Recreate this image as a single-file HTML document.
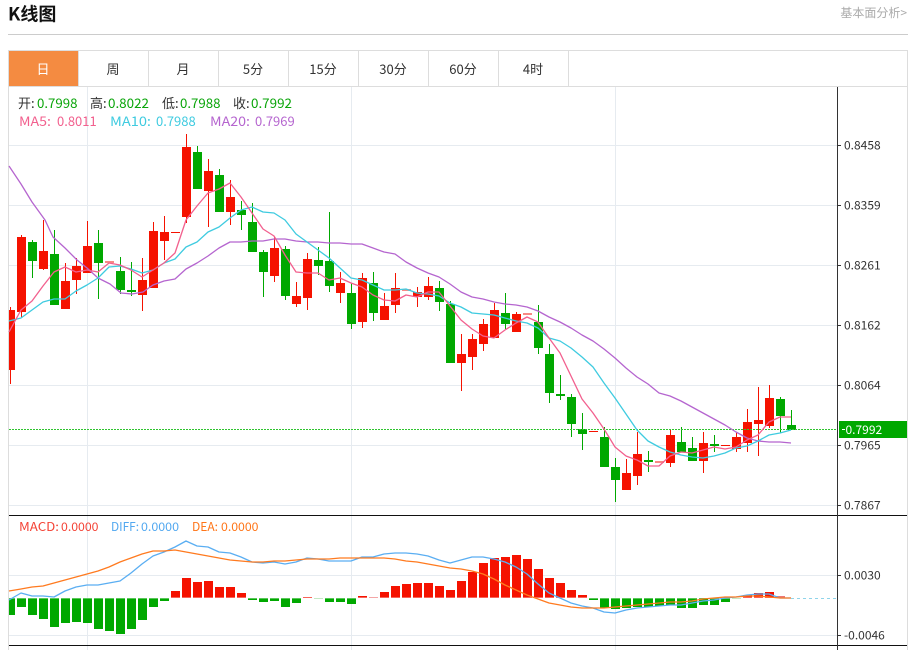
<!DOCTYPE html>
<html><head><meta charset="utf-8"><style>
html,body{margin:0;padding:0;background:#fff;width:913px;height:650px;overflow:hidden}
svg{position:absolute;left:0;top:0;display:block}
text{font-family:"Noto Sans CJK SC","Liberation Sans",sans-serif;font-size:13px;fill:#333}
.tab{text-anchor:middle;font-size:13px}
.ax{font-size:12px;fill:#333}
.g{fill:#0aa50a}
.s{font-size:12px}
</style></head><body>
<svg width="913" height="650" viewBox="0 0 913 650">
<text x="8" y="20.5" style="font-size:18px;font-weight:700;fill:#111">K线图</text>
<text x="907" y="17" text-anchor="end" style="font-size:12px;fill:#aaa">基本面分析&gt;</text>
<g shape-rendering="crispEdges">
<rect x="8" y="34" width="900" height="1" fill="#ccc"/>
<path d="M8.5 650V50.5H907.5V650M8 86.5H908" fill="none" stroke="#ddd"/>
<path d="M78.5 51V86M148.5 51V86M218.5 51V86M288.5 51V86M358.5 51V86M428.5 51V86M498.5 51V86M568.5 51V86" stroke="#ddd" fill="none"/>
<rect x="9" y="51" width="69" height="35" fill="#f48b41"/>
<path d="M9 145.5H837M9 205.5H837M9 265.5H837M9 325.5H837M9 385.5H837M9 445.5H837M9 505.5H837M9 575.5H837M9 635.5H837M87.5 87V650M351.5 87V650M615.5 87V650" stroke="#e6ebf0" fill="none"/>
</g>
<g class="tabs">
<text x="43" y="74" class="tab" style="fill:#fff">日</text>
<text x="113" y="74" class="tab">周</text>
<text x="183" y="74" class="tab">月</text>
<text x="253" y="74" class="tab">5分</text>
<text x="323" y="74" class="tab">15分</text>
<text x="393" y="74" class="tab">30分</text>
<text x="463" y="74" class="tab">60分</text>
<text x="533" y="74" class="tab">4时</text>
</g>
<g shape-rendering="crispEdges">
<path fill="none" stroke="#f51200" d="M10.5 307V384M21.5 235V317M43.5 220V270M65.5 263V309M76.5 258V294M87.5 221V273M142.5 258V311M153.5 222V288M164.5 216V260M186.5 134V223M208.5 159V227M230.5 180V225M274.5 237V282M296.5 282V307M307.5 253V310M340.5 272V303M362.5 273V328M384.5 293V320M395.5 273V313M417.5 287V307M428.5 277V300M461.5 334V391M472.5 334V370M483.5 319V351M494.5 303V338M516.5 312V332M626.5 459V490M637.5 432V485M670.5 429V467M703.5 432V473M736.5 433V452M747.5 409V452M758.5 387V456M769.5 385V428"/>
<path fill="none" stroke="#00a800" d="M32.5 240V278M54.5 230V305M98.5 230V299M120.5 257V294M131.5 262V296M197.5 146V189M219.5 169V212M241.5 201V230M252.5 203V252M263.5 250V297M285.5 246V300M318.5 247V275M329.5 212V292M351.5 283V329M373.5 272V321M439.5 281V311M450.5 301V363M505.5 293V329M538.5 305V354M549.5 344V403M560.5 375V400M571.5 394V437M582.5 413V450M604.5 427V467M615.5 458V502M648.5 451V472M681.5 427V452M692.5 437V461M714.5 435V452M780.5 397V433M791.5 410V430"/>
<path fill="#f51200" d="M9 310h6V370h-6zM17 237h9V312h-9zM39 251h9V269h-9zM61 281h9V309h-9zM72 266h9V280h-9zM83 246h9V273h-9zM138 280h9V295h-9zM149 231h9V288h-9zM160 232h9V241h-9zM171 232h9V233h-9zM182 147h9V217h-9zM204 171h9V191h-9zM226 197h9V212h-9zM270 248h9V276h-9zM292 296h9V304h-9zM303 259h9V298h-9zM336 283h9V293h-9zM358 278h9V322h-9zM380 306h9V320h-9zM391 288h9V305h-9zM413 292h9V297h-9zM424 286h9V297h-9zM457 354h9V363h-9zM468 339h9V357h-9zM479 324h9V344h-9zM490 310h9V338h-9zM512 314h9V332h-9zM589 431h9V432h-9zM622 473h9V490h-9zM633 454h9V476h-9zM666 435h9V463h-9zM699 443h9V461h-9zM721 445h9V446h-9zM732 437h9V449h-9zM743 422h9V443h-9zM754 420h9V424h-9zM765 398h9V426h-9z"/>
<path fill="#f88a85" d="M105 261h9V263h-9zM402 289h9V291h-9zM523 313h9V315h-9zM655 461h9V463h-9z"/>
<path fill="#00a800" d="M28 242h9V261h-9zM50 254h9V305h-9zM94 243h9V263h-9zM116 271h9V290h-9zM127 290h9V292h-9zM193 152h9V189h-9zM215 175h9V212h-9zM237 210h9V215h-9zM248 222h9V252h-9zM259 252h9V272h-9zM281 249h9V296h-9zM314 260h9V266h-9zM325 261h9V286h-9zM347 293h9V324h-9zM369 283h9V313h-9zM435 288h9V302h-9zM446 304h9V363h-9zM501 313h9V324h-9zM534 322h9V348h-9zM545 354h9V393h-9zM556 394h9V396h-9zM567 397h9V424h-9zM578 429h9V434h-9zM600 437h9V467h-9zM611 467h9V480h-9zM644 460h9V462h-9zM677 442h9V452h-9zM688 448h9V461h-9zM710 444h9V446h-9zM776 399h9V416h-9zM787 425h9V430h-9z"/>
</g>
<path fill="none" stroke="#2fc42f" stroke-dasharray="2 1" d="M9 429.5H837" shape-rendering="crispEdges"/>
<g fill="none" stroke-width="1.3" stroke-linejoin="round">
<polyline stroke="#b565cf" points="9,166 21,184 32,202 45,220 53,237 65,248 77,260 87,268 98,278 110,284 121,293 132,294 143,292 153,285 164,281 175,279 186,269 197,263 208,256 219,248 230,242 241,242 252,241 263,241 274,239 285,239 296,241 307,242 318,242 329,243 340,243 351,244 362,244 373,248 384,252 395,254 406,262 417,268 428,273 439,277 450,284 461,292 472,297 483,299 494,302 505,304 516,305 527,307 538,311 549,317 560,322 571,328 582,335 593,341 604,349 615,358 626,368 637,377 648,384 659,393 670,396 681,401 692,407 703,413 714,419 725,425 736,432 747,438 758,441 769,442 780,442 791,443"/>
<polyline stroke="#3fcbe0" points="9,321 21,318 32,310 43,302 54,299 65,299 76,291 87,285 98,278 109,267 120,266 131,269 142,273 153,270 164,263 175,259 186,247 197,242 208,232 219,227 230,218 241,210 252,207 263,212 274,213 285,220 296,234 307,242 318,250 329,258 340,268 351,278 362,280 373,285 384,290 395,290 406,289 417,293 428,294 439,296 450,303 461,307 472,313 483,314 494,315 505,318 516,321 527,323 538,328 549,338 560,341 571,348 582,357 593,367 604,383 615,398 626,414 637,430 648,441 659,447 670,452 681,455 692,457 703,458 714,456 725,453 736,448 747,446 758,441 769,435 780,433 791,430"/>
<polyline stroke="#f2608e" points="9,332 21,310 32,301 43,286 54,272 65,267 76,272 87,270 98,272 109,263 120,265 131,270 142,277 153,270 164,263 175,253 186,220 197,206 208,193 219,189 230,183 241,197 252,213 263,229 274,236 285,255 296,272 307,273 318,273 329,280 340,278 351,283 362,287 373,295 384,300 395,301 406,295 417,297 428,292 439,292 450,306 461,320 472,329 483,336 494,338 505,330 516,323 527,317 538,322 549,338 560,353 571,376 582,399 593,413 604,429 615,447 626,456 637,460 648,466 659,466 670,456 681,452 692,453 703,450 714,447 725,449 736,447 747,440 758,435 769,422 780,417 791,417"/>
</g>
<!-- MACD bars -->
<g shape-rendering="crispEdges">
<path fill="#00a800" d="M9 598h6V615h-6zM17 598h9V607h-9zM28 598h9V615h-9zM39 598h9V619h-9zM50 598h9V627h-9zM61 598h9V623h-9zM72 598h9V622h-9zM83 598h9V623h-9zM94 598h9V629h-9zM105 598h9V631h-9zM116 598h9V634h-9zM127 598h9V629h-9zM138 598h9V620h-9zM149 598h9V607h-9zM160 598h9V601h-9zM248 598h9V600h-9zM259 598h9V602h-9zM270 598h9V601h-9zM281 598h9V607h-9zM292 598h9V603h-9zM325 598h9V602h-9zM336 598h9V602h-9zM347 598h9V604h-9zM589 598h9V600h-9zM600 598h9V608h-9zM611 598h9V609h-9zM622 598h9V608h-9zM633 598h9V607h-9zM644 598h9V607h-9zM655 598h9V606h-9zM666 598h9V605h-9zM677 598h9V608h-9zM688 598h9V608h-9zM699 598h9V605h-9zM710 598h9V605h-9zM721 598h9V602h-9z"/>
<path fill="#a5dca5" d="M314 598h9V599h-9zM732 598h9V599h-9z"/>
<path fill="#f51200" d="M171 591h9V598h-9zM182 578h9V598h-9zM193 582h9V598h-9zM204 581h9V598h-9zM215 587h9V598h-9zM226 587h9V598h-9zM237 593h9V598h-9zM303 597h9V598h-9zM358 596h9V598h-9zM380 592h9V598h-9zM391 586h9V598h-9zM402 584h9V598h-9zM413 583h9V598h-9zM424 583h9V598h-9zM435 586h9V598h-9zM446 590h9V598h-9zM457 581h9V598h-9zM468 572h9V598h-9zM479 563h9V598h-9zM490 558h9V598h-9zM501 557h9V598h-9zM512 555h9V598h-9zM523 559h9V598h-9zM534 569h9V598h-9zM545 578h9V598h-9zM556 583h9V598h-9zM567 590h9V598h-9zM578 595h9V598h-9zM743 595h9V598h-9zM754 593h9V598h-9zM765 592h9V598h-9z"/>
<path fill="#e77" d="M369 597h9V598h-9zM776 596h9V598h-9z"/>
<rect x="9" y="597" width="770" height="2" fill="#fff" opacity=".35"/>
</g>
<path fill="none" stroke="#8fd4ea" stroke-dasharray="3 3" d="M791 598.5H837"/>
<g fill="none" stroke-width="1.3" stroke-linejoin="round">
<polyline stroke="#5aaef2" points="9,600 21,593 32,596 43,596 54,597 65,591 76,587 87,585 98,585 109,583 120,581 131,573 142,564 153,556 164,552 175,547 186,541 197,546 208,547 219,552 230,553 241,557 252,562 263,563 274,562 285,564 296,562 307,558 318,559 329,561 340,561 351,561 362,557 373,557 384,554 395,553 406,553 417,554 428,556 439,560 450,563 461,560 472,557 483,557 494,559 505,562 516,567 527,574 538,584 549,593 560,598 571,603 582,606 593,608 604,612 615,613 626,610 637,608 648,607 659,606 670,605 681,605 692,603 703,601 714,600 725,598 736,597 747,595 758,594 769,594 780,598 791,598"/>
<polyline stroke="#ff7a1f" points="9,591 21,589 32,587 43,586 54,583 65,580 76,577 87,574 98,571 109,567 120,562 131,558 142,554 153,551 164,551 175,550 186,552 197,554 208,556 219,558 230,560 241,561 252,562 263,562 274,561 285,561 296,560 307,559 318,559 329,559 340,558 351,558 362,558 373,558 384,558 395,559 406,561 417,562 428,564 439,566 450,568 461,569 472,571 483,574 494,579 505,585 516,590 527,595 538,599 549,603 560,605 571,607 582,608 593,608 604,608 615,607 626,606 637,605 648,604 659,603 670,602 681,602 692,601 703,599 714,598 725,597 736,597 747,596 758,596 769,597 780,598 791,598"/>
</g>
<!-- axes -->
<g shape-rendering="crispEdges">
<path d="M9 515.5H907M9 645.5H907" stroke="#111" fill="none"/>
<path d="M837.5 87V650" stroke="#333" fill="none"/>
<path d="M837 145.5h4M837 205.5h4M837 265.5h4M837 325.5h4M837 385.5h4M837 445.5h4M837 505.5h4M837 575.5h4M837 635.5h4" stroke="#333" fill="none"/>
<rect x="839" y="421" width="68" height="17" fill="#00a800"/>
<path d="M842 429.5h3" stroke="#fff" fill="none"/>
</g>
<text class="ax" x="844" y="149.5">0.8458</text>
<text class="ax" x="844" y="209.5">0.8359</text>
<text class="ax" x="844" y="269.5">0.8261</text>
<text class="ax" x="844" y="329.5">0.8162</text>
<text class="ax" x="844" y="389.5">0.8064</text>
<text class="ax" x="844" y="449.5">0.7965</text>
<text class="ax" x="844" y="509.5">0.7867</text>
<text class="ax" x="844" y="579.5">0.0030</text>
<text class="ax" x="844" y="639.5">-0.0046</text>
<text x="845.5" y="434" style="fill:#fff;font-size:12px">0.7992</text>
<!-- legends -->
<text x="18" y="108">开:</text><text x="37" y="108" class="g" textLength="40.5" lengthAdjust="spacingAndGlyphs">0.7998</text>
<text x="90" y="108">高:</text><text x="108" y="108" class="g" textLength="41" lengthAdjust="spacingAndGlyphs">0.8022</text>
<text x="162" y="108">低:</text><text x="180" y="108" class="g" textLength="40.5" lengthAdjust="spacingAndGlyphs">0.7988</text>
<text x="233" y="108">收:</text><text x="251" y="108" class="g" textLength="41" lengthAdjust="spacingAndGlyphs">0.7992</text>
<text x="19" y="126" style="fill:#f2608e" textLength="32" lengthAdjust="spacingAndGlyphs">MA5:</text><text x="57" y="126" style="fill:#f2608e">0.8011</text>
<text x="110" y="126" style="fill:#3fcbe0" textLength="41" lengthAdjust="spacingAndGlyphs">MA10:</text><text x="156" y="126" style="fill:#3fcbe0">0.7988</text>
<text x="210" y="126" style="fill:#b565cf" textLength="40" lengthAdjust="spacingAndGlyphs">MA20:</text><text x="255" y="126" style="fill:#b565cf">0.7969</text>
<text x="19" y="531" class="s" style="fill:#f44336" textLength="40" lengthAdjust="spacingAndGlyphs">MACD:</text><text x="61" y="531" class="s" style="fill:#f44336" textLength="37.5" lengthAdjust="spacingAndGlyphs">0.0000</text>
<text x="111" y="531" class="s" style="fill:#52a8f0" textLength="28" lengthAdjust="spacingAndGlyphs">DIFF:</text><text x="141" y="531" class="s" style="fill:#52a8f0" textLength="38" lengthAdjust="spacingAndGlyphs">0.0000</text>
<text x="192" y="531" class="s" style="fill:#ff7518" textLength="26" lengthAdjust="spacingAndGlyphs">DEA:</text><text x="221" y="531" class="s" style="fill:#ff7518" textLength="37.5" lengthAdjust="spacingAndGlyphs">0.0000</text>
</svg>
</body></html>
